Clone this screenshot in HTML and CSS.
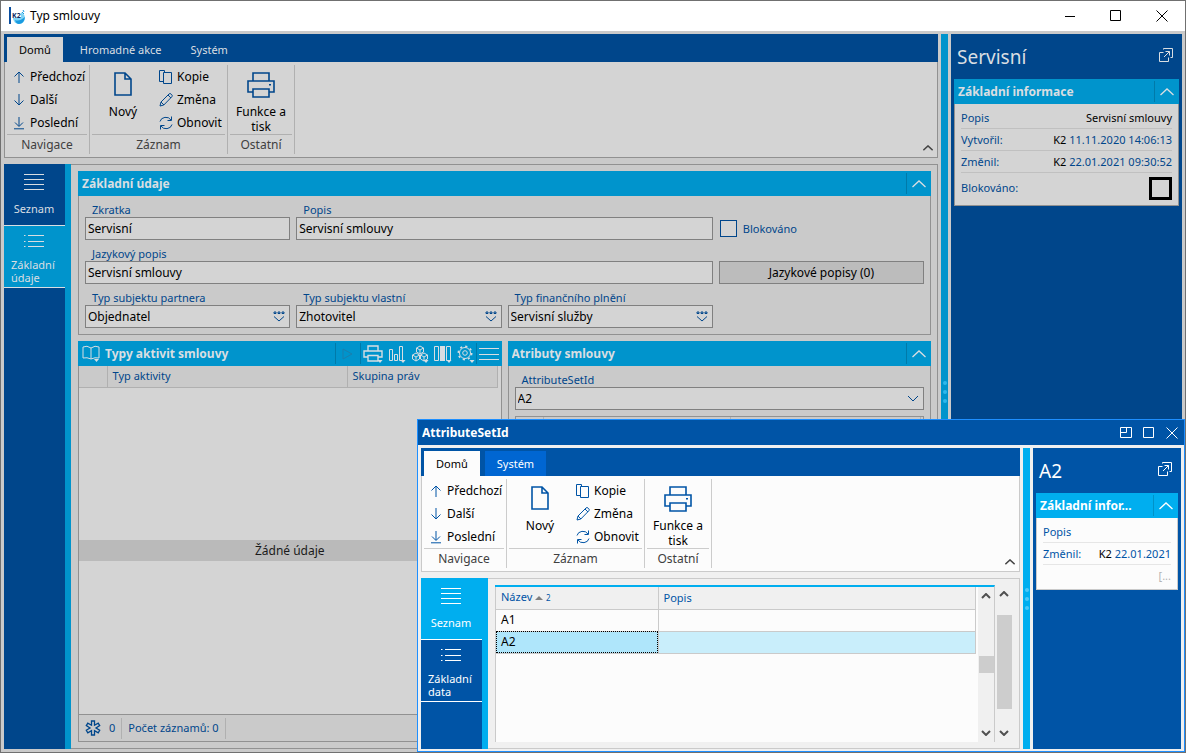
FILE: index.html
```html
<!DOCTYPE html>
<html lang="cs">
<head>
<meta charset="utf-8">
<title>Typ smlouvy</title>
<link rel="stylesheet" href="styles.css">
</head>
<body>
<svg class="sprite" aria-hidden="true">
  <symbol id="i-up" viewBox="0 0 12 14"><path d="M6 13V2M1.500 6.500L6 2l4.500 4.500"/></symbol>
  <symbol id="i-down" viewBox="0 0 12 14"><path d="M6 1v11M1.500 7.500L6 12l4.500-4.500"/></symbol>
  <symbol id="i-last" viewBox="0 0 12 14"><path d="M6 1v9M2 6.500l4 4 4-4M1 12.800h10"/></symbol>
  <symbol id="i-new" viewBox="0 0 18 24"><path stroke-width="1.600" d="M1 1h10l6 6v16H1zM11 1v6h6"/></symbol>
  <symbol id="i-copy" viewBox="0 0 16 16"><path d="M5 12.500H1.500v-11h5V3M5.500 3.500h8v11h-8z"/></symbol>
  <symbol id="i-edit" viewBox="0 0 16 16"><path d="M2 14l1-4L11 2q1-1 2 0l.8.800q1 1 0 2L5.800 13zM10 3l3 3M3 10l3 3"/></symbol>
  <symbol id="i-refresh" viewBox="0 0 16 16"><path d="M2 6.500A6 5.500 0 0 1 13 5M13.500 1.500V5.500H9.500M14 9.500A6 5.500 0 0 1 3 11M2.500 14.500v-4h4"/></symbol>
  <symbol id="i-print" viewBox="0 0 28 26"><path stroke-width="1.600" d="M6 9V1h16v8M6 20H1V9h26v11h-5M6 17h16v8H6zM22 12.800h2"/></symbol>
  <symbol id="i-list" viewBox="0 0 20 18"><path d="M0 1.500h20M0 6.500h20M0 11.500h20M0 16.500h20"/></symbol>
  <symbol id="i-bullets" viewBox="0 0 20 14"><path d="M4 1.500h16M4 7.500h16M4 12.500h16M0 1.500h1.500M0 7.500h1.500M0 12.500h1.500"/></symbol>
  <symbol id="i-chev-up" viewBox="0 0 14 8"><path d="M.5 7L7 1l6.500 6"/></symbol>
  <symbol id="i-chev-down" viewBox="0 0 12 8"><path d="M1 1l5 5 5-5"/></symbol>
  <symbol id="i-pick" viewBox="0 0 12 11"><path d="M1 1h2v1.500H1zM5 1h2v1.500H5zM9 1h2v1.500H9zM1 5.500L6 10l5-4.500"/></symbol>
  <symbol id="i-popout" viewBox="0 0 14 14"><path d="M4.500 1.500V.5h9v9h-2M4.500 4.500h-4v9h9v-4M5 9l5.500-5.500M6.500 3.500h4v4"/></symbol>
  <symbol id="i-min" viewBox="0 0 12 12"><path d="M1 6.500h10"/></symbol>
  <symbol id="i-max" viewBox="0 0 12 12"><path d="M.5.5h10v10H.5z"/></symbol>
  <symbol id="i-close" viewBox="0 0 12 12"><path d="M.5.500l11 11M11.500.500L.5 11.500"/></symbol>
  <symbol id="i-dock" viewBox="0 0 12 12"><path d="M.5.5h11v10H.5zM6.500.5v5h-6"/></symbol>
  <symbol id="i-book" viewBox="0 0 18 17"><path d="M9 3Q5 0 1 2v11q4-1 8 1 4-2 8-1V2Q13 0 9 3v11"/><path class="solid" d="M12 14h5l-2.500 3z"/></symbol>
  <symbol id="i-play" viewBox="0 0 12 12"><path d="M1 1l9 5-9 5z"/></symbol>
  <symbol id="i-tprint" viewBox="0 0 20 18"><path stroke-width="1.400" d="M5 6V1h10v5M5 12H1V6h18v6h-4M5 10.500h10V16H5z"/><path class="solid" d="M14.500 15h5L17 18z"/></symbol>
  <symbol id="i-chart" viewBox="0 0 18 18"><path d="M1.500 4.500h3v11h-3zM6.500 9.500h3v6h-3zM11.500 1.500h3v14h-3z"/><path class="solid" d="M12.500 15h5L15 18z"/></symbol>
  <symbol id="i-cubes" viewBox="0 0 18 18"><path d="M9 1l3.500 2v4L9 9 5.500 7V3zM5 8l3.500 2v4L5 16l-3.500-2v-4zM13 8l3.500 2v4L13 16l-3.500-2v-4zM5.500 3L9 5l3.500-2M9 5v4M1.500 10L5 12l3.500-2M5 12v4M9.500 10l3.500 2 3.500-2M13 12v4"/><path class="solid" d="M12.500 15h5L15 18z"/></symbol>
  <symbol id="i-columns" viewBox="0 0 18 18"><path d="M.5 1.500h4v14h-4zM12.500 1.500h4v14h-4z"/><path class="solid" d="M6 1h5v15H6zM12.500 15h5L15 18z"/></symbol>
  <symbol id="i-gear" viewBox="0 0 18 18"><circle cx="8" cy="8" r="5.500"/><circle cx="8" cy="8" r="2.300"/><circle cx="8" cy="8" r="6.700" stroke-width="1.600" stroke-dasharray="2.200 3.060"/><path class="solid" d="M12.500 15h5L15 18z"/></symbol>
  <symbol id="i-menu" viewBox="0 0 20 14"><path d="M0 1.500h20M0 7.500h20M0 12.500h20"/></symbol>
  <symbol id="i-star" viewBox="0 0 16 16"><path stroke-width="1.300" d="M6.500 1h3v4.200l3.700-2.100 1.500 2.500L11 8l3.700 2.300-1.500 2.500-3.700-2.100V15h-3v-4.300l-3.700 2.100-1.500-2.500L5 8 1.300 5.600l1.500-2.500 3.700 2.100z"/></symbol>
  <symbol id="i-bold-up" viewBox="0 0 10 6"><path stroke-width="2" d="M1 5l4-4 4 4"/></symbol>
  <symbol id="i-bold-down" viewBox="0 0 10 6"><path stroke-width="2" d="M1 1l4 4 4-4"/></symbol>
</svg>

<div class="window">
  <header class="titlebar">
    <svg class="logo" viewBox="0 0 17 18" aria-hidden="true">
      <circle cx="10" cy="11" r="6" fill="#7fd4f5"/><path d="M6 13q4 2 10-3-1 7-6 7-3 0-4-4z" fill="#1a9be0"/>
      <path d="M3 2h9v9H3z" fill="#ffffff"/><path d="M13 5l2 2M14 3l1 2" stroke="#1a9be0"/>
      <path d="M0 0h2v17H0z" fill="#0b4fa0"/><text x="3" y="11" class="logo-text">K2</text>
    </svg>
    <h1 class="titlebar-text">Typ smlouvy</h1>
    <button class="win-btn" aria-label="Minimalizovat"><svg class="ic s12"><use href="#i-min"/></svg></button>
    <button class="win-btn" aria-label="Maximalizovat"><svg class="ic s12"><use href="#i-max"/></svg></button>
    <button class="win-btn" aria-label="Zavřít"><svg class="ic s12"><use href="#i-close"/></svg></button>
  </header>

  <div class="frame">
    <div class="main">
      <section class="ribbon">
        <nav class="tabs">
          <button class="tab on">Domů</button>
          <button class="tab">Hromadné akce</button>
          <button class="tab">Systém</button>
        </nav>
        <div class="ribbon-body">
          <div class="group g-nav">
            <div class="group-items">
              <div class="cmds">
                <button class="cmd"><svg class="ic nav"><use href="#i-up"/></svg>Předchozí</button>
                <button class="cmd"><svg class="ic nav"><use href="#i-down"/></svg>Další</button>
                <button class="cmd"><svg class="ic nav"><use href="#i-last"/></svg>Poslední</button>
              </div>
            </div>
            <div class="group-name">Navigace</div>
          </div>
          <div class="group g-rec">
            <div class="group-items">
              <button class="big"><svg class="ic new"><use href="#i-new"/></svg>Nový</button>
              <div class="cmds tight">
                <button class="cmd"><svg class="ic s16"><use href="#i-copy"/></svg>Kopie</button>
                <button class="cmd"><svg class="ic s16"><use href="#i-edit"/></svg>Změna</button>
                <button class="cmd"><svg class="ic s16"><use href="#i-refresh"/></svg>Obnovit</button>
              </div>
            </div>
            <div class="group-name">Záznam</div>
          </div>
          <div class="group g-oth">
            <div class="group-items">
              <button class="big"><svg class="ic print"><use href="#i-print"/></svg>Funkce a tisk</button>
            </div>
            <div class="group-name">Ostatní</div>
          </div>
          <button class="fold" aria-label="Sbalit"><svg class="ic foldic"><use href="#i-chev-up"/></svg></button>
        </div>
      </section>

      <div class="work">
        <nav class="side">
          <button class="side-tab"><svg class="ic list"><use href="#i-list"/></svg><span class="side-text">Seznam</span></button>
          <button class="side-tab second on"><svg class="ic bullets"><use href="#i-bullets"/></svg><span class="side-text left">Základní údaje</span></button>
        </nav>
        <div class="pane">
          <section class="card">
            <header class="card-head"><h2 class="card-title">Základní údaje</h2><button class="collapse" aria-label="Sbalit"><svg class="ic chev"><use href="#i-chev-up"/></svg></button></header>
            <form class="fields">
              <div class="field"><label for="f1">Zkratka</label><input id="f1" class="box" value="Servisní"></div>
              <div class="field span2"><label for="f2">Popis</label><input id="f2" class="box" value="Servisní smlouvy"></div>
              <div class="check"><input id="f3" type="checkbox" class="tick"><label for="f3">Blokováno</label></div>
              <div class="field span3"><label for="f4">Jazykový popis</label><input id="f4" class="box" value="Servisní smlouvy"></div>
              <button type="button" class="push">Jazykové popisy (0)</button>
              <div class="field"><label for="f5">Typ subjektu partnera</label><div class="pick"><select id="f5" class="box"><option>Objednatel</option></select><svg class="ic pickic"><use href="#i-pick"/></svg></div></div>
              <div class="field"><label for="f6">Typ subjektu vlastní</label><div class="pick"><select id="f6" class="box"><option>Zhotovitel</option></select><svg class="ic pickic"><use href="#i-pick"/></svg></div></div>
              <div class="field"><label for="f7">Typ finančního plnění</label><div class="pick"><select id="f7" class="box"><option>Servisní služby</option></select><svg class="ic pickic"><use href="#i-pick"/></svg></div></div>
            </form>
          </section>

          <div class="pair">
            <section class="card">
              <header class="card-head tools">
                <button class="tool" aria-label="Kniha"><svg class="ic book"><use href="#i-book"/></svg></button>
                <h2 class="card-title">Typy aktivit smlouvy</h2>
                <span class="bar"></span>
                <button class="tool faint" aria-label="Spustit"><svg class="ic s12"><use href="#i-play"/></svg></button>
                <span class="bar"></span>
                <button class="tool" aria-label="Tisk"><svg class="ic tprint"><use href="#i-tprint"/></svg></button>
                <button class="tool" aria-label="Graf"><svg class="ic s18"><use href="#i-chart"/></svg></button>
                <button class="tool" aria-label="Kostky"><svg class="ic s18"><use href="#i-cubes"/></svg></button>
                <button class="tool" aria-label="Sloupce"><svg class="ic s18"><use href="#i-columns"/></svg></button>
                <button class="tool" aria-label="Nastavení"><svg class="ic s18"><use href="#i-gear"/></svg></button>
                <span class="bar"></span>
                <button class="tool" aria-label="Nabídka"><svg class="ic menu"><use href="#i-menu"/></svg></button>
              </header>
              <div class="grid-area">
                <table class="act">
                  <thead><tr><th class="c-mark"></th><th>Typ aktivity</th><th class="c-right">Skupina práv</th></tr></thead>
                </table>
                <div class="empty"><p class="empty-text">Žádné údaje</p></div>
                <footer class="status">
                  <span class="stat"><svg class="ic s16"><use href="#i-star"/></svg>0</span>
                  <span class="stat">Počet záznamů: 0</span>
                </footer>
              </div>
            </section>
            <section class="card">
              <header class="card-head"><h2 class="card-title">Atributy smlouvy</h2><button class="collapse" aria-label="Sbalit"><svg class="ic chev"><use href="#i-chev-up"/></svg></button></header>
              <div class="attrs">
                <div class="field"><label for="f8">AttributeSetId</label><div class="pick"><select id="f8" class="box"><option>A2</option></select><svg class="ic dropic"><use href="#i-chev-down"/></svg></div></div>
                <div class="subgrid"><span class="sub a"></span><span class="sub b"></span><span class="sub c"></span></div>
              </div>
            </section>
          </div>
        </div>
      </div>
    </div>
    <div class="splitter"><i class="dot"></i><i class="dot"></i><i class="dot"></i></div>
    <aside class="preview">
      <header class="preview-head"><h2 class="preview-title">Servisní</h2><button class="tool" aria-label="Otevřít"><svg class="ic pop"><use href="#i-popout"/></svg></button></header>
      <section class="card">
        <header class="card-head"><h3 class="card-title">Základní informace</h3><button class="collapse" aria-label="Sbalit"><svg class="ic chev"><use href="#i-chev-up"/></svg></button></header>
        <dl class="info">
          <div class="info-row"><dt>Popis</dt><dd><b class="v">Servisní smlouvy</b></dd></div>
          <div class="info-row"><dt>Vytvořil:</dt><dd><b class="v">K2</b> 11.11.2020 14:06:13</dd></div>
          <div class="info-row"><dt>Změnil:</dt><dd><b class="v">K2</b> 22.01.2021 09:30:52</dd></div>
          <div class="info-row tall"><dt><label for="f9">Blokováno:</label></dt><dd><input id="f9" type="checkbox" class="tick heavy"></dd></div>
        </dl>
      </section>
    </aside>
  </div>

  <div class="dialog" role="dialog" aria-label="AttributeSetId">
    <header class="dialog-head">
      <h2 class="card-title">AttributeSetId</h2>
      <button class="tool" aria-label="Ukotvit"><svg class="ic s12"><use href="#i-dock"/></svg></button>
      <button class="tool" aria-label="Zvětšit"><svg class="ic s12"><use href="#i-max"/></svg></button>
      <button class="tool" aria-label="Zavřít"><svg class="ic s12"><use href="#i-close"/></svg></button>
    </header>
    <div class="frame">
      <div class="main">
        <section class="ribbon">
          <nav class="tabs">
            <button class="tab on">Domů</button>
            <button class="tab hot">Systém</button>
          </nav>
          <div class="ribbon-body">
            <div class="group g-nav">
              <div class="group-items">
                <div class="cmds">
                  <button class="cmd"><svg class="ic nav"><use href="#i-up"/></svg>Předchozí</button>
                  <button class="cmd"><svg class="ic nav"><use href="#i-down"/></svg>Další</button>
                  <button class="cmd"><svg class="ic nav"><use href="#i-last"/></svg>Poslední</button>
                </div>
              </div>
              <div class="group-name">Navigace</div>
            </div>
            <div class="group g-rec">
              <div class="group-items">
                <button class="big"><svg class="ic new"><use href="#i-new"/></svg>Nový</button>
                <div class="cmds tight">
                  <button class="cmd"><svg class="ic s16"><use href="#i-copy"/></svg>Kopie</button>
                  <button class="cmd"><svg class="ic s16"><use href="#i-edit"/></svg>Změna</button>
                  <button class="cmd"><svg class="ic s16"><use href="#i-refresh"/></svg>Obnovit</button>
                </div>
              </div>
              <div class="group-name">Záznam</div>
            </div>
            <div class="group g-oth">
              <div class="group-items">
                <button class="big"><svg class="ic print"><use href="#i-print"/></svg>Funkce a tisk</button>
              </div>
              <div class="group-name">Ostatní</div>
            </div>
            <button class="fold" aria-label="Sbalit"><svg class="ic foldic"><use href="#i-chev-up"/></svg></button>
          </div>
        </section>
        <div class="work">
          <nav class="side">
            <button class="side-tab on"><svg class="ic list"><use href="#i-list"/></svg><span class="side-text">Seznam</span></button>
            <button class="side-tab second"><svg class="ic bullets"><use href="#i-bullets"/></svg><span class="side-text left">Základní data</span></button>
          </nav>
          <div class="pane lookup">
            <div class="sheet">
              <div class="sheet-body">
                <table class="rows">
                  <thead><tr><th class="c-name">Název <span class="sort"></span> <small class="ord">2</small></th><th>Popis</th></tr></thead>
                  <tbody>
                    <tr><td>A1</td><td></td></tr>
                    <tr class="sel"><td class="cur">A2</td><td></td></tr>
                  </tbody>
                </table>
              </div>
              <div class="scroll">
                <svg class="ic bold"><use href="#i-bold-up"/></svg>
                <div class="track mid"><span class="thumb"></span></div>
                <svg class="ic bold"><use href="#i-bold-down"/></svg>
              </div>
            </div>
            <div class="scroll outer">
              <svg class="ic bold"><use href="#i-bold-up"/></svg>
              <div class="track"><span class="thumb long"></span></div>
              <svg class="ic bold"><use href="#i-bold-down"/></svg>
            </div>
          </div>
        </div>
      </div>
      <div class="splitter"><i class="dot"></i><i class="dot"></i><i class="dot"></i></div>
      <aside class="preview">
        <header class="preview-head"><h2 class="preview-title">A2</h2><button class="tool" aria-label="Otevřít"><svg class="ic pop"><use href="#i-popout"/></svg></button></header>
        <section class="card">
          <header class="card-head"><h3 class="card-title">Základní infor...</h3><button class="collapse" aria-label="Sbalit"><svg class="ic chev"><use href="#i-chev-up"/></svg></button></header>
          <dl class="info">
            <div class="info-row"><dt>Popis</dt><dd></dd></div>
            <div class="info-row"><dt>Změnil:</dt><dd><b class="v">K2</b> 22.01.2021</dd></div>
            <div class="info-row more"><dd>[...</dd></div>
          </dl>
        </section>
      </aside>
    </div>
  </div>
</div>
</body>
</html>
```

FILE: styles.css
```css
* { box-sizing: border-box; }
html, body { height: 100%; margin: 0; }
body, button, input, select {
  font-family: "Noto Sans", "Open Sans", sans-serif;
  font-size: 12px;
  line-height: 16px;
}
button { border: 0; padding: 0; background: none; color: inherit; white-space: nowrap; }
h1, h2, h3, p, dl, dd, dt { margin: 0; font-weight: normal; }
.sprite { display: none; }
.ic { flex: none; display: block; fill: none; stroke: currentColor; stroke-width: 1; }
.solid { fill: currentColor; stroke: none; }
.s12 { width: 12px; height: 12px; }
.s16 { width: 16px; height: 16px; }
.s18 { width: 18px; height: 18px; }

.window {
  --navy: #00468b; --cyan: #0094cc; --bg: #cacaca; --light: #d4d4d4;
  --line: #919191; --soft: #b0b0b0; --on: #d9dee2; --seam: #007aa9; --dot: #2fb8ec;
  --ink: #00468b;
  position: relative;
  display: flex; flex-direction: column;
  height: 100vh; min-height: 600px;
  border: 1px solid #707070;
  background: var(--bg);
}
.dialog {
  --navy: #0054a6; --cyan: #00aeef; --bg: #f0f0f0; --light: #fcfcfc;
  --line: #cacaca; --soft: #cccccc; --on: #ffffff; --seam: #0092c8; --dot: #4cc8f8;
  --ink: #0054a6;
  position: absolute; left: 416px; top: 418px; right: 0; bottom: 0;
  display: flex; flex-direction: column;
  border: 1px solid #1e8fff;
  background: var(--bg);
}

.titlebar { flex: none; display: flex; align-items: center; height: 30px; background: #ffffff; color: #000000; }
.logo { width: 17px; height: 18px; margin: 0 4px 0 8px; }
.logo-text { font: bold 7px "Noto Sans", sans-serif; fill: #0b2a60; }
.titlebar-text { flex: 1; font-size: 12px; }
.win-btn { display: flex; align-items: center; justify-content: center; width: 46px; height: 30px; }

.frame { flex: 1; min-height: 0; display: flex; gap: 3px; padding: 3px; }
.dialog .frame { padding: 3px 3px 2px; }
.main { flex: 1; min-width: 0; display: flex; flex-direction: column; gap: 6px; }

.tabs { display: flex; align-items: flex-end; gap: 5px; height: 28px; padding-left: 3px; background: var(--navy); }
.tab { height: 25px; padding: 0 12px; color: var(--on); font-size: 11px; }
.tab.on { background: var(--light); color: #000000; }
.tab.hot { background: #0066d2; }
.ribbon-body { display: flex; align-items: stretch; padding: 3px 2px; border: 1px solid var(--line); border-top: 0; background: var(--light); }
.group { margin-right: 2px; padding-right: 2px; border-right: 1px solid var(--soft); }
.group-items { display: flex; height: 70px; border-bottom: 1px solid var(--soft); }
.g-nav { width: 83px; }
.g-rec { width: 136px; }
.g-oth { width: 65px; }
.group-name { height: 19px; line-height: 19px; text-align: center; color: #404040; }
.cmds { padding-left: 6px; }
.cmds.tight { padding-left: 4px; }
.cmd { display: flex; align-items: center; gap: 5px; height: 23px; color: #000000; }
.tight .cmd { gap: 3px; }
.cmd .ic, .big .ic { color: var(--ink); }
.nav { width: 12px; height: 14px; }
.big { display: flex; flex-direction: column; align-items: center; width: 62px; padding-top: 7px; gap: 8px; line-height: 15px; white-space: normal; color: #000000; }
.new { width: 18px; height: 24px; }
.print { width: 28px; height: 26px; margin-bottom: -2px; }
.fold { margin-left: auto; align-self: flex-end; padding: 3px 2px 3px 3px; color: #444444; }
.foldic { width: 10px; height: 6px; stroke-width: 2; }

.work { flex: 1; min-height: 0; display: flex; }
.side { flex: none; width: 67px; background: var(--navy); border-right: 6px solid var(--cyan); }
.side-tab { display: flex; flex-direction: column; align-items: center; width: 100%; height: 62px; padding: 9px 1px 0 0; border-bottom: 1px solid var(--on); color: var(--on); }
.side-tab.second { padding-top: 8px; }
.side-tab.on { background: var(--cyan); }
.list { width: 20px; height: 18px; margin-bottom: 11px; }
.bullets { width: 20px; height: 14px; margin-bottom: 10px; }
.side-text { font-size: 11px; line-height: 13px; white-space: normal; }
.side-text.left { width: 100%; padding-left: 7px; text-align: left; }

.pane { flex: 1; min-width: 0; display: flex; flex-direction: column; gap: 6px; padding: 6px; border: 1px solid var(--line); border-left: 0; padding-left: 7px; }
.card { display: flex; flex-direction: column; }
.card-head { flex: none; display: flex; align-items: center; height: 25px; padding-left: 4px; background: var(--cyan); color: var(--on); }
.card-title { flex: 1; min-width: 0; overflow: hidden; text-overflow: ellipsis; white-space: nowrap; font-size: 12px; font-weight: bold; }
.collapse { flex: none; display: flex; align-items: center; justify-content: center; width: 25px; height: 21px; border-left: 1px solid var(--seam); }
.chev { width: 14px; height: 8px; stroke-width: 1.3; }

.fields { display: grid; grid-template-columns: repeat(4, 1fr); column-gap: 6px; padding: 0 6px 6px; border: 1px solid var(--line); border-top: 0; color: var(--ink); }
.span2 { grid-column: span 2; }
.span3 { grid-column: span 3; }
.field { display: flex; flex-direction: column; padding-top: 6px; }
.field > label { height: 15px; padding-left: 7px; line-height: 15px; font-size: 11px; }
.box { width: 100%; height: 23px; padding: 0 2px; border: 1px solid #808080; border-radius: 0; background: var(--light); color: #000000; appearance: none; }
.pick { position: relative; }
.pickic { position: absolute; right: 5px; top: 6px; width: 12px; height: 11px; color: var(--ink); }
.dropic { position: absolute; right: 5px; top: 8px; width: 12px; height: 8px; color: var(--ink); }
.check { display: flex; align-items: center; gap: 6px; align-self: end; height: 23px; padding-left: 1px; font-size: 11px; }
.tick { appearance: none; width: 17px; height: 17px; margin: 0; border: 1px solid var(--ink); background: var(--light); }
.push { align-self: end; height: 23px; border: 1px solid #808080; background: #bcbcbc; color: #000000; }

.pair { flex: 1; min-height: 0; display: grid; grid-template-columns: 1fr 1fr; gap: 6px; }
.tools .card-title { padding-left: 5px; }
.tool { flex: none; display: block; }
.tools .tool { margin-right: 5px; }
.tools .tool:first-child { margin-right: 0; }
.tools .tool:last-child { margin: 0 3px 0 2px; }
.tools .faint { margin: 0 6px; color: #1a7fae; }
.bar { width: 1px; height: 21px; background: var(--seam); }
.tools .bar + .tool { margin-left: 2px; }
.tools .bar + .faint { margin-left: 6px; }
.tools .tool:nth-last-child(3) { margin-right: 1px; }
.book { width: 18px; height: 17px; }
.tprint { width: 20px; height: 18px; }
.menu { width: 20px; height: 14px; }
.grid-area { flex: 1; display: flex; flex-direction: column; border: 1px solid var(--line); border-top: 0; background: var(--light); }
table { border-collapse: collapse; table-layout: fixed; width: 100%; }
th { font-weight: normal; text-align: left; color: var(--ink); }
.act { width: auto; margin-right: 3px; background: var(--bg); font-size: 11px; }
.act th { height: 21px; padding: 0 5px; border: 1px solid var(--soft); border-top: 0; border-left: 0; }
.act .c-mark { width: 28px; }
.act .c-right { width: 150px; }
.empty { flex: 1; display: flex; align-items: center; }
.empty-text { flex: 1; height: 21px; line-height: 21px; text-align: center; background: #bababa; color: #1a1a1a; }
.status { display: flex; align-items: center; height: 27px; border-top: 1px solid var(--line); background: var(--bg); color: var(--ink); font-size: 11px; }
.stat { display: flex; align-items: center; gap: 8px; height: 21px; padding: 0 6px; border-right: 1px solid var(--soft); }
.attrs { flex: 1; display: flex; flex-direction: column; gap: 6px; padding: 0 6px 6px; border: 1px solid var(--line); border-top: 0; color: var(--ink); }
.subgrid { flex: 1; display: flex; border: 1px solid var(--line); }
.sub { border-right: 1px solid var(--soft); }
.a { width: 28px; }
.b { width: 187px; }
.c { flex: 1; margin-right: 2px; }

.splitter { flex: none; width: 7px; display: flex; flex-direction: column; align-items: center; justify-content: center; gap: 5px; background: var(--cyan); }
.dot { width: 4px; height: 4px; border-radius: 2px; background: var(--dot); }

.preview { flex: none; width: 231px; padding: 0 3px; background: var(--navy); color: var(--on); }
.dialog .preview { width: 148px; }
.preview-head { display: flex; align-items: center; justify-content: space-between; height: 45px; padding: 0 6px 0 3px; }
.preview-title { font-size: 19px; line-height: 26px; }
.pop { width: 14px; height: 14px; }
.preview .tool { margin-bottom: 4px; }
.info { padding: 3px 6px 2px; border: 1px solid var(--line); border-top: 0; background: var(--light); color: var(--ink); font-size: 11px; }
.info-row { display: flex; align-items: center; justify-content: space-between; height: 22px; border-bottom: 1px solid #c0c0c0; white-space: nowrap; }
.dialog .info-row { border-color: #e6e6e6; }
.info-row.tall, .dialog .info-row.more { border: 0; }
.info-row.tall { height: 30px; }
.info-row.more { justify-content: flex-end; color: #b4b4b4; }
.v { font-weight: normal; color: #000000; }
.heavy { display: block; width: 23px; height: 23px; border: 3px solid #000000; }

.dialog-head { flex: none; display: flex; align-items: center; gap: 11px; height: 25px; padding: 0 6px 0 4px; background: var(--navy); color: #ffffff; }

.pane.lookup { flex-direction: row; gap: 1px; padding-right: 7px; }
.sheet { flex: 1; display: flex; border-top: 2px solid var(--cyan); border-right: 1px solid var(--line); background: var(--light); }
.sheet-body { flex: 1; border-left: 1px solid var(--line); }
.rows th { height: 22px; padding: 0 5px; border-right: 1px solid var(--line); border-bottom: 1px solid var(--line); background: var(--bg); font-size: 11px; }
.rows td { height: 22px; padding: 0 5px; border-right: 1px solid var(--line); border-bottom: 1px solid var(--line); }
.rows .c-name { width: 162px; }
.rows .sel td { background: #c9eefb; }
.rows .sel .cur { background: #afe6fb; outline: 1px dotted #000000; outline-offset: -1px; }
.sort { display: inline-block; border: 4px solid transparent; border-top: 0; border-bottom-color: #808080; vertical-align: middle; }
.ord { font-size: 8px; }
.scroll { flex: none; width: 16px; margin-left: 2px; display: flex; flex-direction: column; align-items: center; padding: 6px 0; background: var(--bg); color: #505050; }
.outer { margin: 0; }
.bold { width: 10px; height: 6px; }
.track { flex: 1; width: 15px; padding: 18px 0 21px; display: flex; flex-direction: column; }
.mid { justify-content: center; padding: 0; }
.thumb { height: 17px; background: #cdcdcd; }
.thumb.long { flex: 1; }
```
